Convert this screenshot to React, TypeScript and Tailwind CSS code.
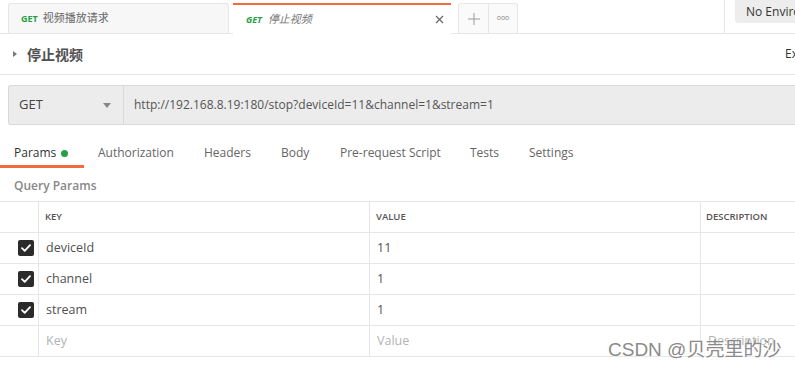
const rows = [
  { key: "deviceId", value: "11" },
  { key: "channel", value: "1" },
  { key: "stream", value: "1" },
];

const tabs = [
  { label: "Params", w: "w-[84px]" },
  { label: "Authorization", w: "w-[106px]" },
  { label: "Headers", w: "w-[77px]" },
  { label: "Body", w: "w-[59px]" },
  { label: "Pre-request Script", w: "w-[130px]" },
  { label: "Tests", w: "w-[59px]" },
  { label: "Settings", w: "w-[80px]" },
];

function Check() {
  return (
    <div className="w-4 h-4 rounded-[2px] bg-[#2b2b2b] flex items-center justify-center">
      <svg width="10" height="8" viewBox="0 0 10 8" fill="none">
        <path d="M1 4.2L3.7 6.8L9 1.2" stroke="white" strokeWidth="1.8" strokeLinecap="round" strokeLinejoin="round" />
      </svg>
    </div>
  );
}

export default function App() {
  return (
    <div className="relative w-[795px] h-[374px] overflow-hidden bg-white text-[#505050] font-['Open_Sans','Noto_Sans_CJK_SC',sans-serif]">
      {/* Tab bar */}
      <div className="flex items-end h-[34px] border-b border-[#e6e6e6] pl-2">
        <div className="w-[221px] h-[30px] flex items-center gap-[5px] pl-[12px] bg-[#f7f7f7] border border-b-0 border-[#e6e6e6] rounded-t-[3px]">
          <span className="text-[9px] font-bold text-[#26a046]">GET</span>
          <span className="text-[11px] text-[#666]">视频播放请求</span>
        </div>
        <div className="ml-1 w-[218px] h-[31px] -mb-px flex items-center bg-white border-t-2 border-[#f26b3a] pl-[13px] pr-[7px]">
          <span className="text-[9px] font-bold italic text-[#26a046]">GET</span>
          <span className="ml-[6px] text-[11px] italic text-[#777]">停止视频</span>
          <svg className="ml-auto" width="9" height="9" viewBox="0 0 9 9">
            <path d="M1 1L8 8M8 1L1 8" stroke="#6b6b6b" strokeWidth="1.3" />
          </svg>
        </div>
        <div className="ml-[7px] h-[30px] flex border border-b-0 border-[#e6e6e6] rounded-t-[3px] bg-[#fafafa]">
          <div className="w-[30px] flex items-center justify-center border-r border-[#e6e6e6]">
            <svg width="12" height="12" viewBox="0 0 12 12">
              <path d="M6 0V12M0 6H12" stroke="#9a9a9a" strokeWidth="1" />
            </svg>
          </div>
          <div className="w-[28px] flex items-center justify-center text-[#888] text-[7px]">ooo</div>
        </div>
        <div className="flex-1" />
        <div className="self-stretch w-px bg-[#e6e6e6]" />
        <div className="self-start ml-[10px] h-[23px] w-[60px] bg-[#ededed] rounded-bl-[3px] flex items-center pl-[11px] text-[12px] text-[#333] whitespace-nowrap overflow-hidden">
          No Environment
        </div>
      </div>

      {/* Title row */}
      <div className="h-[41px] flex items-center border-b border-[#e6e6e6] pl-[11px]">
        <svg width="8" height="8" viewBox="0 0 8 8">
          <path d="M2 1L6 4L2 7Z" fill="#777" />
        </svg>
        <span className="ml-[8px] text-[14px] font-bold text-[#505050]">停止视频</span>
        <span className="ml-auto text-[12px] text-[#333] -mr-[12px] w-[22px] overflow-hidden">Ex</span>
      </div>

      {/* URL bar */}
      <div className="mt-[10px] ml-2 h-[40px] flex bg-[#ececec] border border-r-0 border-[#d9d9d9] rounded-l-[3px]">
        <div className="w-[115px] flex items-center pl-[10px] pr-[12px] border-r border-[#d9d9d9]">
          <span className="text-[13px] text-[#444]">GET</span>
          <svg className="ml-auto" width="8" height="5" viewBox="0 0 8 5">
            <path d="M0 0H8L4 5Z" fill="#888" />
          </svg>
        </div>
        <div className="flex items-center pl-[10px] text-[12px] text-[#555]">
          http://192.168.8.19:180/stop?deviceId=11&amp;channel=1&amp;stream=1
        </div>
      </div>

      {/* Request tabs */}
      <div className="mt-[15px] flex">
        {tabs.map((t, i) => (
          <div key={t.label} className={`${t.w} flex flex-col`}>
            <div className="h-[24px] pt-[2px] pl-[14px] flex items-center gap-[5px] text-[12px] whitespace-nowrap">
              <span className={i === 0 ? "text-[#333]" : "text-[#666]"}>{t.label}</span>
              {i === 0 && <span className="w-[7px] h-[7px] rounded-full bg-[#26a046]" />}
            </div>
            <div className={i === 0 ? "h-[3px] mt-[1px] bg-[#f26b3a]" : "h-[3px] mt-[1px]"} />
          </div>
        ))}
      </div>

      <div className="mt-[9px] pl-[14px] h-[18px] flex items-center text-[12px] font-semibold text-[#888]">Query Params</div>

      {/* Params table */}
      <div className="mt-[6px] border-t border-[#e6e6e6]">
        <div className="grid grid-cols-[38px_331px_331px_1fr] h-[31px] border-b border-[#e6e6e6] text-[9.5px] font-semibold text-[#555]">
          <div />
          <div className="border-l border-[#e6e6e6] flex items-center pl-[6px]">KEY</div>
          <div className="border-l border-[#e6e6e6] flex items-center pl-[6px]">VALUE</div>
          <div className="border-l border-[#e6e6e6] flex items-center pl-[5px]">DESCRIPTION</div>
        </div>
        {rows.map((r) => (
          <div key={r.key} className="grid grid-cols-[38px_331px_331px_1fr] h-[31px] border-b border-[#e6e6e6] text-[12.5px] text-[#505050]">
            <div className="flex items-center justify-end pr-[4px]">
              <Check />
            </div>
            <div className="border-l border-[#e6e6e6] flex items-center pl-[7px]">{r.key}</div>
            <div className="border-l border-[#e6e6e6] flex items-center pl-[7px]">{r.value}</div>
            <div className="border-l border-[#e6e6e6]" />
          </div>
        ))}
        <div className="grid grid-cols-[38px_331px_331px_1fr] h-[31px] border-b border-[#e6e6e6] text-[12.5px] text-[#b3b3b3]">
          <div />
          <div className="border-l border-[#e6e6e6] flex items-center pl-[7px]">Key</div>
          <div className="border-l border-[#e6e6e6] flex items-center pl-[7px]">Value</div>
          <div className="border-l border-[#e6e6e6] flex items-center pl-[7px] whitespace-nowrap">Description</div>
        </div>
      </div>

      {/* Watermark */}
      <div className="absolute left-[608px] top-[338px] text-[19px] leading-[24px] text-[#8a8a8a] whitespace-nowrap font-['Liberation_Sans','Noto_Sans_CJK_SC',sans-serif] [text-shadow:0_0_2px_white,0_0_1px_white]">
        CSDN @贝壳里的沙
      </div>
    </div>
  );
}
